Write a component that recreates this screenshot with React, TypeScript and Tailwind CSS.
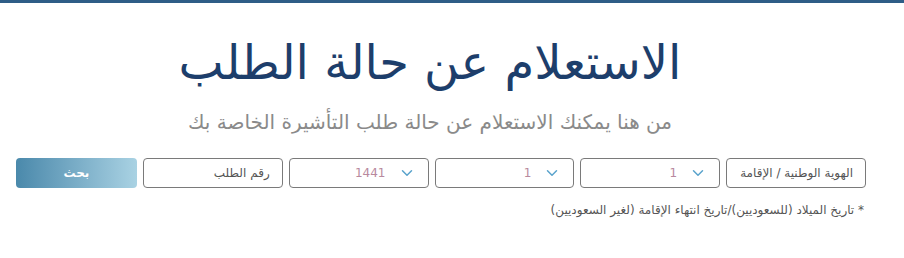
import { ChevronDown } from 'lucide-react';

const font = { fontFamily: '"DejaVu Sans", "Noto Sans", sans-serif' };

function SelectBox({ value }: { value: string }) {
  return (
    <div className="flex h-[30px] w-[140px] items-center justify-end gap-[12px] rounded-[4px] border border-[#7a7a7a] bg-white pr-[12px]">
      <span className="text-[12px] text-[#b8899e]">{value}</span>
      <ChevronDown className="h-[18px] w-[18px] text-[#5aa3cc]" strokeWidth={2} />
    </div>
  );
}

function TextBox({ placeholder }: { placeholder: string }) {
  return (
    <div className="flex h-[30px] w-[140px] items-center rounded-[4px] border border-[#7a7a7a] bg-white pr-[12px]" dir="rtl">
      <span className="text-[12px] text-[#555]">{placeholder}</span>
    </div>
  );
}

export default function App() {
  return (
    <div className="h-[258px] w-[904px] bg-white" style={font}>
      <div className="h-[3px] bg-[#2e5d87]" />

      {/* Header */}
      <div className="w-[860px] text-center">
        <h1 className="mt-[24px] text-[48px] leading-[70px] text-[#1d3e6b]">الاستعلام عن حالة الطلب</h1>
        <p className="mt-[12px] text-[20px] leading-[26px] text-[#8a8a8a]">من هنا يمكنك الاستعلام عن حالة طلب التأشيرة الخاصة بك</p>
      </div>

      {/* Form */}
      <div className="ml-[16px] mt-[23px] w-[850px]">
        <div className="flex items-center gap-[6px]">
          <button className="h-[30px] w-[121px] rounded-[4px] bg-gradient-to-r from-[#4a89ab] to-[#a9d2e3] text-[12px] font-bold text-white">
            بحث
          </button>
          <TextBox placeholder="رقم الطلب" />
          <SelectBox value="1441" />
          <SelectBox value="1" />
          <SelectBox value="1" />
          <TextBox placeholder="الهوية الوطنية / الإقامة" />
        </div>
        <p className="mt-[13px] pr-[2px] text-right text-[12px] text-[#555]" dir="rtl">
          * تاريخ الميلاد (للسعوديين)/تاريخ انتهاء الإقامة (لغير السعوديين)
        </p>
      </div>
    </div>
  );
}
